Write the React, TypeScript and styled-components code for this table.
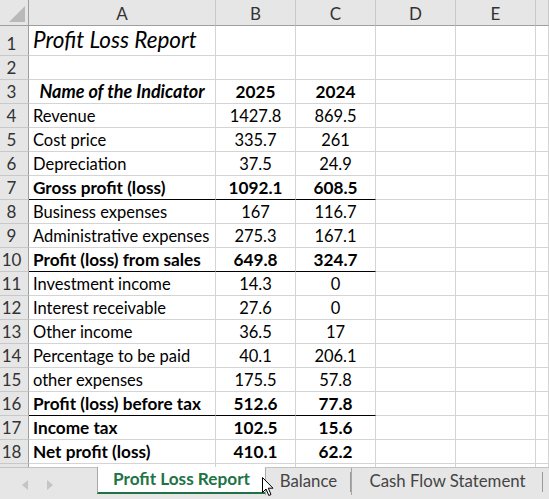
import React from "react";
import styled, { createGlobalStyle, css } from "styled-components";

const Global = createGlobalStyle`
  html, body { margin: 0; padding: 0; background: #fff; }
  body { font-family: Lato, "Liberation Sans", sans-serif; overflow: hidden; }
`;

const FONT = `Lato, "Liberation Sans", sans-serif`;

const Page = styled.div`
  width: 549px;
  height: 499px;
  display: flex;
  flex-direction: column;
  overflow: hidden;
  font-family: ${FONT};
`;

const Sheet = styled.div`
  flex: 1;
  overflow: hidden;
  display: grid;
  grid-template-columns: 29px 187px 80px 80px 80px 80px 1fr;
  grid-template-rows: 26px 30px repeat(18, 24px);
  align-content: start;
`;

const Corner = styled.div`
  background: #e6e6e6;
  border-right: 1px solid #9e9e9e;
  border-bottom: 1px solid #9e9e9e;
  position: relative;
  &::after {
    content: "";
    position: absolute;
    right: 3px;
    bottom: 3px;
    width: 0;
    height: 0;
    border-left: 16px solid transparent;
    border-bottom: 16px solid #b9b9b9;
  }
`;

const ColHead = styled.div`
  background: #e6e6e6;
  border-right: 1px solid #c8c8c8;
  border-bottom: 1px solid #9e9e9e;
  color: #333;
  font-size: 17px;
  display: flex;
  align-items: center;
  justify-content: center;
  padding-top: 1px;
`;

const RowHead = styled.div`
  background: #e6e6e6;
  border-right: 1px solid #9e9e9e;
  border-bottom: 1px solid #c8c8c8;
  color: #333;
  font-size: 17px;
  display: flex;
  align-items: flex-end;
  justify-content: center;
  padding: 0 5px 1px 0;
`;

type CellProps = {
  $align?: "left" | "center";
  $bold?: boolean;
  $italic?: boolean;
  $line?: boolean;
  $title?: boolean;
};

const Cell = styled.div<CellProps>`
  border-right: 1px solid #d4d4d4;
  border-bottom: 1px solid ${(p) => (p.$line ? "#000" : "#d4d4d4")};
  color: #000;
  font-size: ${(p) => (p.$bold ? (p.$italic ? "18px" : "17.2px") : "16.5px")};
  white-space: nowrap;
  overflow: visible;
  display: flex;
  align-items: flex-end;
  padding: 0 4px 1px 4px;
  justify-content: ${(p) => (p.$align === "center" ? "center" : "flex-start")};
  font-weight: ${(p) => (p.$bold ? 700 : 400)};
  font-style: ${(p) => (p.$italic ? "italic" : "normal")};
  ${(p) =>
    p.$title &&
    css`
      font-size: 22.5px;
      padding-bottom: 2px;
    `}
`;

const TabBar = styled.div`
  height: 32px;
  flex: none;
  display: flex;
  background: #e6e6e6;
  border-top: 1px solid #c3c3c3;
  position: relative;
  box-sizing: border-box;
`;

const Nav = styled.div`
  width: 97px;
  display: flex;
  align-items: center;
  gap: 19px;
  padding-left: 22px;
  padding-top: 2px;
  box-sizing: border-box;
`;

const Arrow = styled.div<{ $dir: "left" | "right" }>`
  width: 0;
  height: 0;
  border-top: 5px solid transparent;
  border-bottom: 5px solid transparent;
  ${(p) =>
    p.$dir === "left"
      ? css`border-right: 6px solid #c4c4c4;`
      : css`border-left: 6px solid #c4c4c4;`}
`;

const ActiveTab = styled.div`
  width: 168px;
  margin-top: -1px;
  height: 27px;
  background: #fff;
  border-left: 1px solid #a8a8a8;
  border-bottom: 2px solid #217346;
  box-sizing: border-box;
  color: #217346;
  font-weight: 700;
  font-size: 17.2px;
  display: flex;
  align-items: center;
  justify-content: center;
  padding-bottom: 2px;
`;

const Tab = styled.div<{ $w: number }>`
  width: ${(p) => p.$w}px;
  height: 27px;
  box-sizing: border-box;
  border-left: 1px solid #a8a8a8;
  color: #444;
  font-size: 16.8px;
  display: flex;
  align-items: center;
  justify-content: center;
  position: relative;
  padding-bottom: 2px;
  &::after {
    content: "";
    position: absolute;
    right: 0;
    top: 4px;
    height: 20px;
    width: 1px;
    background: #9a9a9a;
  }
`;

const Cursor = styled.svg`
  position: absolute;
  left: 262px;
  top: 9px;
`;

type Row = {
  label: string;
  b: string;
  c: string;
  bold?: boolean;
  line?: boolean;
};

const rows: Row[] = [
  { label: "Revenue", b: "1427.8", c: "869.5" },
  { label: "Cost price", b: "335.7", c: "261" },
  { label: "Depreciation", b: "37.5", c: "24.9" },
  { label: "Gross profit (loss)", b: "1092.1", c: "608.5", bold: true, line: true },
  { label: "Business expenses", b: "167", c: "116.7" },
  { label: "Administrative expenses", b: "275.3", c: "167.1" },
  { label: "Profit (loss) from sales", b: "649.8", c: "324.7", bold: true, line: true },
  { label: "Investment income", b: "14.3", c: "0" },
  { label: "Interest receivable", b: "27.6", c: "0" },
  { label: "Other income", b: "36.5", c: "17" },
  { label: "Percentage to be paid", b: "40.1", c: "206.1" },
  { label: "other expenses", b: "175.5", c: "57.8" },
  { label: "Profit (loss) before tax", b: "512.6", c: "77.8", bold: true, line: true },
  { label: "Income tax", b: "102.5", c: "15.6", bold: true },
  { label: "Net profit (loss)", b: "410.1", c: "62.2", bold: true },
];

const Empty = () => (
  <>
    <Cell />
    <Cell />
    <Cell />
  </>
);

export default function App() {
  return (
    <Page>
      <Global />
      <Sheet>
        <Corner />
        {["A", "B", "C", "D", "E", ""].map((l, i) => (
          <ColHead key={i}>{l}</ColHead>
        ))}

        <RowHead>1</RowHead>
        <Cell $title $italic>Profit Loss Report</Cell>
        <Cell />
        <Cell />
        <Empty />

        <RowHead>2</RowHead>
        <Cell />
        <Cell />
        <Cell />
        <Empty />

        <RowHead>3</RowHead>
        <Cell $align="center" $bold $italic>Name of the Indicator</Cell>
        <Cell $align="center" $bold>2025</Cell>
        <Cell $align="center" $bold>2024</Cell>
        <Empty />

        {rows.map((r, i) => (
          <React.Fragment key={i}>
            <RowHead>{i + 4}</RowHead>
            <Cell $bold={r.bold} $line={r.line}>{r.label}</Cell>
            <Cell $align="center" $bold={r.bold} $line={r.line}>{r.b}</Cell>
            <Cell $align="center" $bold={r.bold} $line={r.line}>{r.c}</Cell>
            <Empty />
          </React.Fragment>
        ))}

        <RowHead />
        <Cell />
        <Cell />
        <Cell />
        <Empty />
      </Sheet>
      <TabBar>
        <Nav>
          <Arrow $dir="left" />
          <Arrow $dir="right" />
        </Nav>
        <ActiveTab>Profit Loss Report</ActiveTab>
        <Tab $w={86}>Balance</Tab>
        <Tab $w={192}>Cash Flow Statement</Tab>
        <Cursor width="14" height="20" viewBox="0 0 14 20">
          <path
            d="M0.5 0.5 L0.5 15.5 L4 12 L6.8 18.5 L9 17.5 L6.3 11.2 L11 11.2 Z"
            fill="#fff"
            stroke="#000"
            strokeWidth="1"
            strokeLinejoin="miter"
          />
        </Cursor>
      </TabBar>
    </Page>
  );
}
